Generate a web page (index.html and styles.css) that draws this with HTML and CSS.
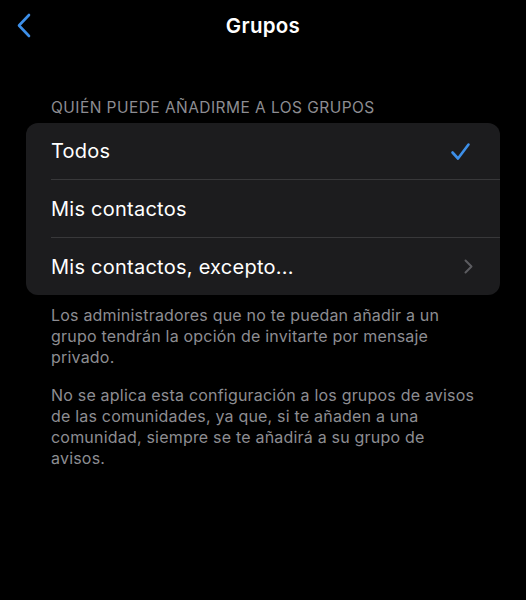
FILE: index.html
```html
<!DOCTYPE html>
<html lang="es">
<head>
<meta charset="UTF-8" />
<meta name="viewport" content="width=device-width, initial-scale=1.0">
<title>Grupos</title>
<link rel="stylesheet" href="styles.css">
</head>
<body>

<div class="navbar">
  <a class="back" href="#">
    <svg width="16" height="25" viewBox="0 0 16 25"><path d="M13 2 L3 12.5 L13 23" fill="none" stroke="#3d8fe8" stroke-width="2.6" stroke-linecap="round" stroke-linejoin="round"/></svg>
  </a>
  <div class="title">Grupos</div>
  <div></div>
</div>

<div class="section">
  <div class="section-title">QUIÉN PUEDE AÑADIRME A LOS GRUPOS</div>
  <div class="card">
    <div class="row">
      <div class="row-body">
        <span>Todos</span>
        <svg class="check" width="21" height="19" viewBox="0 0 21 19"><path d="M2.5 10.5 L8 16.5 L18.5 2.5" fill="none" stroke="#3d8fe8" stroke-width="2.6" stroke-linecap="round" stroke-linejoin="round"/></svg>
      </div>
    </div>
    <div class="row">
      <div class="row-body"><span>Mis contactos</span></div>
    </div>
    <div class="row">
      <div class="row-body">
        <span>Mis contactos, excepto...</span>
        <svg class="chevron" width="9" height="15" viewBox="0 0 9 15"><path d="M1.5 1.5 L7.5 7.5 L1.5 13.5" fill="none" stroke="#5c5c60" stroke-width="2" stroke-linecap="round" stroke-linejoin="round"/></svg>
      </div>
    </div>
  </div>
  <div class="footer">
    <p>Los administradores que no te puedan añadir a un grupo tendrán la opción de invitarte por mensaje privado.</p>
    <p>No se aplica esta configuración a los grupos de avisos de las comunidades, ya que, si te añaden a una comunidad, siempre se te añadirá a su grupo de avisos.</p>
  </div>
</div>

</body>
</html>
```

FILE: styles.css
```css
body, html { margin:0; padding:0; background:#000; color:#fff; font-family:"Inter", "Noto Sans", sans-serif; }

.navbar { display:grid; grid-template-columns:1fr auto 1fr; align-items:center; height:50px; }
.back { display:flex; padding-left:16px; }
.title { font-size:20.5px; font-weight:600; letter-spacing:0.3px; }

.section { padding:49px 26px 0; }
.section-title { margin:0 0 6px 25px; font-size:15.5px; line-height:18px; color:#8d8d92; letter-spacing:0.45px; }

.card { background:#1c1c1e; border-radius:12px; overflow:hidden; }
.row { padding-left:25px; }
.row-body { display:flex; align-items:center; justify-content:space-between; height:57px; padding-right:29px; border-top:1px solid #38383a; font-size:20px; letter-spacing:0.25px; }
.row:first-child .row-body { border-top:none; height:56px; }
.chevron { margin-right:-2px; }

.footer { padding:10px 25px 0; font-size:16px; line-height:21px; color:#8d8d92; letter-spacing:0.2px; }
.footer p { margin:0 0 17px; }
```
